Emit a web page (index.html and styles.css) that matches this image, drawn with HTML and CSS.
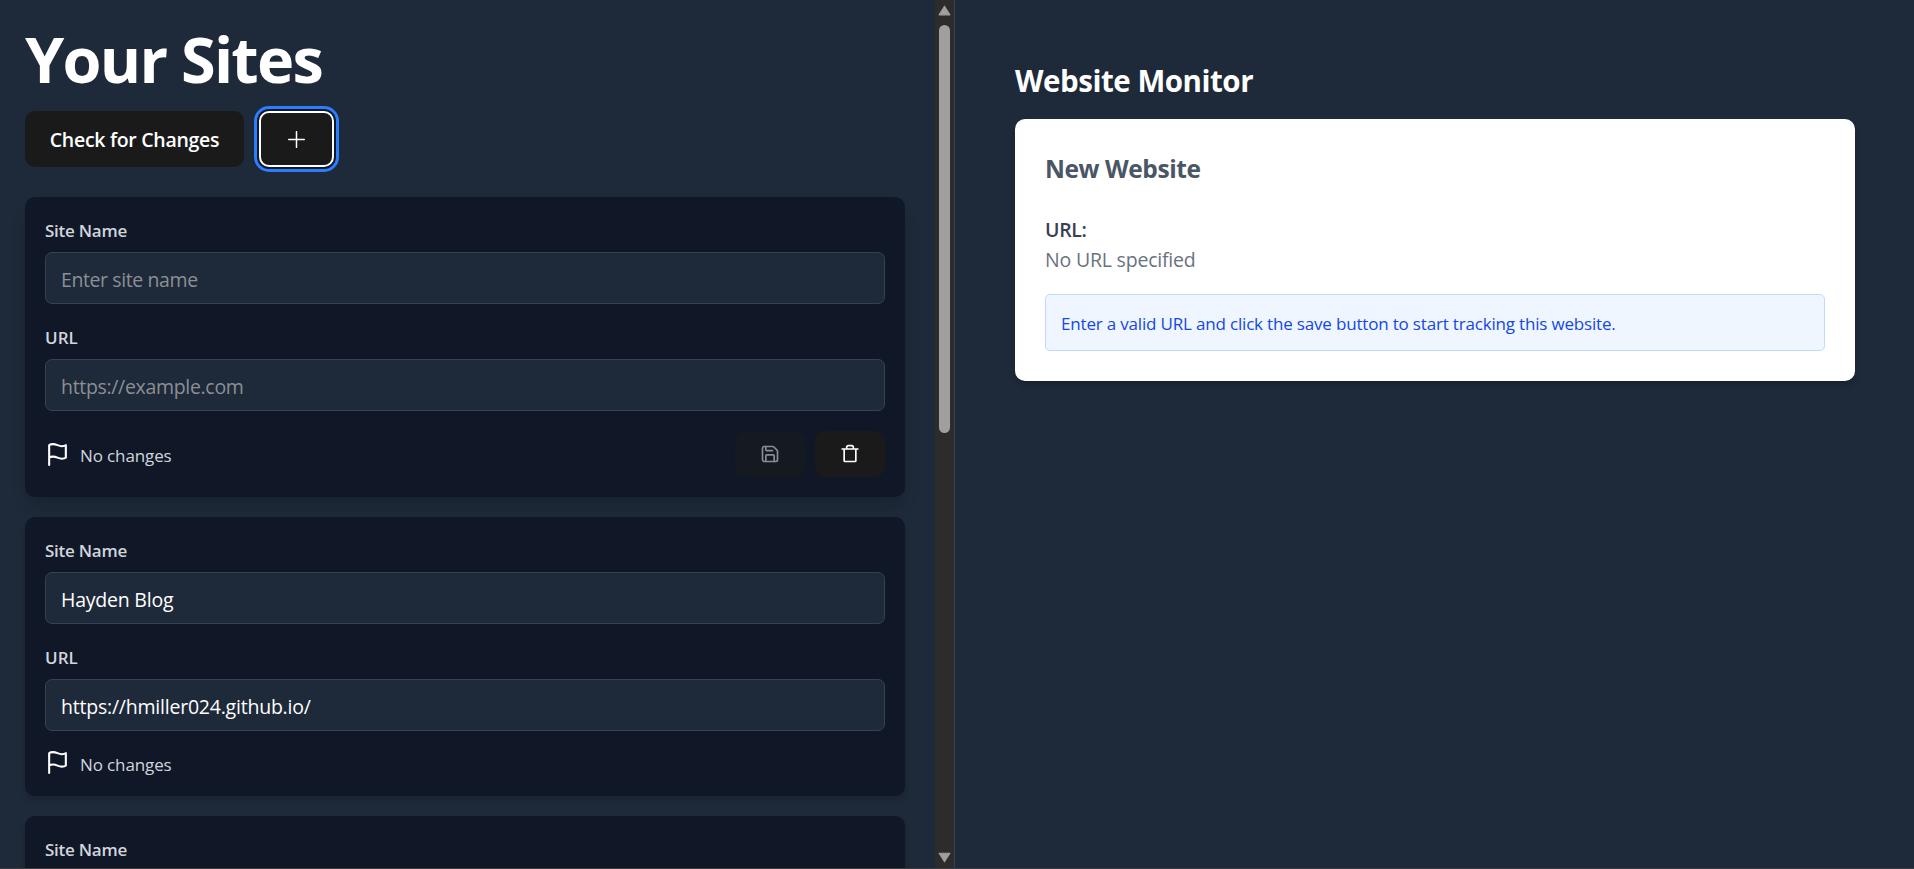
FILE: index.html
```html
<!DOCTYPE html>
<html lang="en">
<head>
<meta charset="utf-8">
<title>Your Sites</title>
<link rel="stylesheet" href="styles.css">
</head>
<body>
<div class="app">
  <div class="left">
    <main class="sites">
      <h1><span class="t-h1">Your Sites</span></h1>
      <div class="toolbar">
        <button class="btn check"><span class="t-check">Check for Changes</span></button>
        <button class="btn add" aria-label="Add site"><svg viewBox="0 0 17 17" class="i-plus"><path d="M8.500 .7v15.600M.7 8.500h15.600"/></svg></button>
      </div>
      <section class="card new">
        <label><span class="t-name">Site Name</span></label>
        <div class="field empty"><span class="t-enter">Enter site name</span></div>
        <label><span class="t-url">URL</span></label>
        <div class="field empty"><span class="t-example">https://example.com</span></div>
        <div class="status">
          <svg class="flag" viewBox="0 0 24 24"><path d="M4 15s1-1 4-1 5 2 8 2 4-1 4-1V3s-1 1-4 1-5-2-8-2-4 1-4 1zM4 22v-7"/></svg>
          <span class="t-nochg">No changes</span>
          <button class="btn icon save" aria-label="Save"><svg viewBox="0 0 24 24"><path d="M15.2 3a2 2 0 0 1 1.4.6l3.8 3.8a2 2 0 0 1 .6 1.4V19a2 2 0 0 1-2 2H5a2 2 0 0 1-2-2V5a2 2 0 0 1 2-2z"/><path d="M17 21v-7a1 1 0 0 0-1-1H8a1 1 0 0 0-1 1v7M7 3v4a1 1 0 0 0 1 1h7"/></svg></button>
          <button class="btn icon trash" aria-label="Delete"><svg viewBox="0 0 24 24"><path d="M2.500 6h19M5 6v14a1 1 0 0 0 1 1h12a1 1 0 0 0 1-1V6M8 6V4a2 2 0 0 1 2-2h4a2 2 0 0 1 2 2v2"/></svg></button>
        </div>
      </section>
      <section class="card">
        <label><span class="t-name">Site Name</span></label>
        <div class="field"><span class="t-hayden">Hayden Blog</span></div>
        <label><span class="t-url">URL</span></label>
        <div class="field"><span class="t-github">https://hmiller024.github.io/</span></div>
        <div class="status">
          <svg class="flag" viewBox="0 0 24 24"><path d="M4 15s1-1 4-1 5 2 8 2 4-1 4-1V3s-1 1-4 1-5-2-8-2-4 1-4 1zM4 22v-7"/></svg>
          <span class="t-nochg">No changes</span>
        </div>
      </section>
      <section class="card">
        <label><span class="t-name">Site Name</span></label>
        <div class="field"></div>
      </section>
    </main>
    <div class="scrollbar">
      <svg class="arrow" viewBox="0 0 12 10"><path d="M6 1 11 9H1z"/></svg>
      <div class="thumb"></div>
      <svg class="arrow down" viewBox="0 0 12 10"><path d="M6 9 11 1H1z"/></svg>
    </div>
  </div>
  <aside class="right">
    <h2><span class="t-monitor">Website Monitor</span></h2>
    <section class="panel">
      <h3><span class="t-new">New Website</span></h3>
      <p class="key"><span class="t-key">URL:</span></p>
      <p class="value"><span class="t-value">No URL specified</span></p>
      <p class="note"><span class="t-note">Enter a valid URL and click the save button to start tracking this website.</span></p>
    </section>
  </aside>
</div>
</body>
</html>
```
FILE: styles.css
```css
* { box-sizing: border-box; margin: 0; }
body { background: #1e2939; color: #fff; font: 20px/30px "Segoe UI", "Open Sans", "Noto Sans", sans-serif; overflow: hidden; }
.app { display: flex; height: 869px; border-bottom: 1px solid #3c3c3e; overflow: hidden; }
.left { width: 955px; display: flex; border-right: 1px solid #364153; }
.sites { width: 935px; padding: 24px 30px 0 25px; }
span { white-space: nowrap; }
h1 { font-size: 63px; line-height: 70px; font-weight: 700; }
.toolbar { display: flex; gap: 15px; margin: 17px 0 30px; }
.btn { display: flex; align-items: center; justify-content: center; background: #1a1a1a; border: 0; border-radius: 10px; color: #fff; padding: 0; font: inherit; }
.check { width: 219px; height: 56px; padding-top: 2px; font-weight: 600; font-size: 19.500px; }
.add { width: 75px; height: 56px; border: 2px solid #fff; box-shadow: 0 0 0 2px #101828, 0 0 0 5px #2b7fff; }
.i-plus { width: 17px; height: 17px; stroke: #fff; stroke-width: 1.500; }
.card { height: 279px; background: #101828; border-radius: 10px; padding: 20px; margin-bottom: 20px; box-shadow: 0 5px 7px -1px rgba(0,0,0,.1), 0 2px 5px -2px rgba(0,0,0,.1); }
.new { height: 300px; box-shadow: 0 12px 19px -4px rgba(0,0,0,.12), 0 5px 7px -5px rgba(0,0,0,.1); }
label { display: block; height: 25px; line-height: 27px; margin-bottom: 10px; font-size: 17px; font-weight: 600; color: #d1d5dc; }
.field { height: 52px; border: 1px solid #364153; border-radius: 7px; background: #1e2939; padding: 0 15px; line-height: 53px; font-size: 19.500px; margin-bottom: 20px; }
.empty { color: #8b8f96; }
.status { display: flex; align-items: center; height: 25px; font-size: 17px; color: #d1d5dc; margin-top: -1px; }
.new .status { height: 46px; margin-top: 0; }
.status > span { margin-left: 10px; margin-top: 4px; }
svg { display: block; fill: none; stroke-linecap: round; stroke-linejoin: round; }
.flag { width: 25px; height: 25px; stroke: #fff; stroke-width: 2; }
.icon { width: 70px; height: 46px; }
.icon svg { width: 20px; height: 20px; stroke: #fff; stroke-width: 2; }
.save { margin-left: auto; opacity: .5; }
.trash { margin-left: 10px; }
.scrollbar { width: 19px; background: #2c2c2c; display: flex; flex-direction: column; align-items: center; padding: 5px 0; }
.arrow { width: 13px; height: 11px; fill: #9f9f9f; stroke: #9f9f9f; stroke-width: 1; }
.thumb { width: 11px; height: 408px; margin-top: 9px; border-radius: 6px; background: #9f9f9f; }
.down { margin-top: auto; }
.right { flex: 1; padding: 61px 59px 0 60px; }
h2 { font-size: 29.500px; line-height: 40px; font-weight: 700; }
.panel { height: 262px; margin-top: 18px; padding: 30px; background: #fff; border-radius: 10px; box-shadow: 0 5px 7px -1px rgba(0,0,0,.15), 0 2px 5px -2px rgba(0,0,0,.1); }
h3 { font-size: 24.500px; line-height: 40px; font-weight: 700; color: #4a5565; }
.key { margin-top: 26px; height: 30px; font-weight: 600; font-size: 19.500px; color: #364153; }
.value { color: #6a7282; font-size: 19.500px; height: 30px; }
.note { margin-top: 19px; height: 57px; line-height: 57px; padding: 0 15px; background: #eff6ff; border: 1px solid #bedbff; border-radius: 5px; color: #1447e6; font-size: 17px; }

/* Tracking per text style */
.t-h1 { letter-spacing: -1.750px; }
.t-check { letter-spacing: -.29px; }
.t-name { letter-spacing: -.25px; }
.t-enter { letter-spacing: -.4px; }
.t-example { letter-spacing: -.32px; }
.t-nochg { letter-spacing: -.12px; }
.t-hayden { letter-spacing: -.22px; }
.t-github { letter-spacing: -.22px; }
.t-monitor { letter-spacing: -.47px; }
.t-new { letter-spacing: -.43px; }
.t-key { letter-spacing: -.35px; }
.t-value { letter-spacing: -.2px; }
.t-note { letter-spacing: -.18px; }
```
